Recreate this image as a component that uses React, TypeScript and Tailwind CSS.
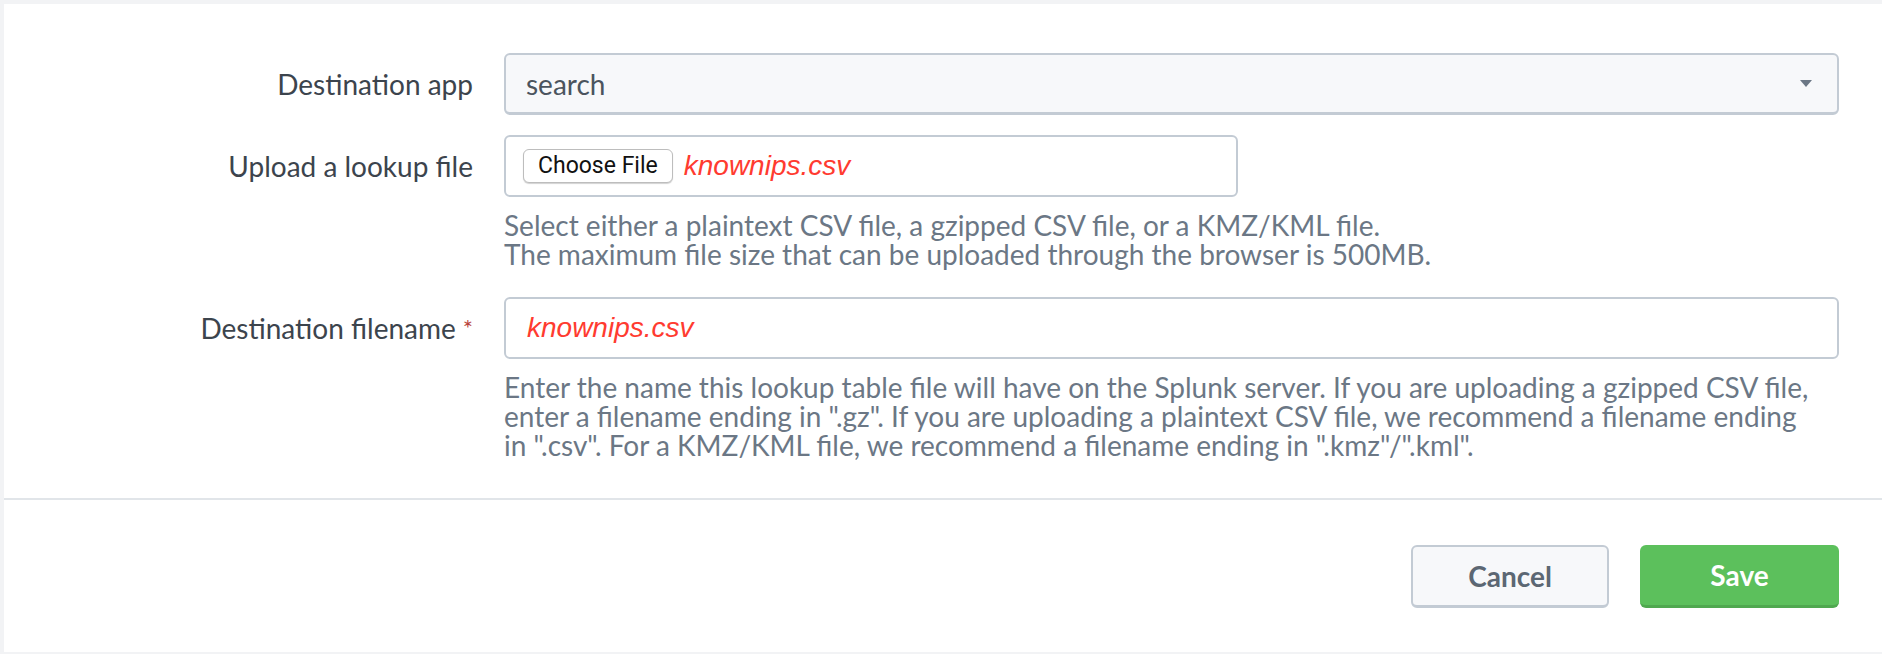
import React from "react";

function Label({ children }: { children: React.ReactNode }) {
  return (
    <div className="flex h-[62px] items-center justify-end whitespace-nowrap text-[28px] text-[#3c444d]">
      {children}
    </div>
  );
}

export default function App() {
  return (
    <div className="h-[654px] w-full overflow-hidden bg-[#f2f3f5] pl-[4px] pt-[4px] font-[Lato,sans-serif]">
      <div className="flex h-[648px] flex-col bg-white">
        {/* form */}
        <div className="h-[494px] pr-[43px] pt-[49px]">
          {/* Destination app */}
          <div className="grid grid-cols-[469px_1fr] gap-x-[31px]">
            <Label>Destination app</Label>
            <div className="flex h-[62px] items-center justify-between rounded-[6px] border-2 border-b-[3px] border-[#c3cbd4] bg-[#f7f8fa] pl-[20px] pr-[25px]">
              <span className="text-[28px] text-[#4b545e]">search</span>
              <svg width="12" height="7" viewBox="0 0 12 7" aria-hidden="true">
                <path d="M0 0H12L6 7Z" fill="#6b7785" />
              </svg>
            </div>
          </div>

          {/* Upload a lookup file */}
          <div className="mt-[20px] grid grid-cols-[469px_1fr] gap-x-[31px]">
            <Label>Upload a lookup file</Label>
            <div>
              <div className="flex h-[62px] w-[734px] items-center rounded-[6px] border-2 border-[#c3cbd4] bg-white pl-[17px]">
                <div className="flex h-[34px] items-center rounded-[6px] border border-[#bdbdbd] bg-white px-[14px] font-[Roboto,sans-serif] text-[23px] text-[#111] shadow-[0_1px_1px_rgba(0,0,0,0.18)]">
                  Choose File
                </div>
                <span className="ml-[11px] font-['Liberation_Sans',Arial,sans-serif] text-[28px] italic text-[#ff3b30]">
                  knownips.csv
                </span>
              </div>
              <div className="mt-[14px] text-[28px] leading-[29px] text-[#6b7785]">
                Select either a plaintext CSV file, a gzipped CSV file, or a KMZ/KML file.
                <br />
                The maximum file size that can be uploaded through the browser is 500MB.
              </div>
            </div>
          </div>

          {/* Destination filename */}
          <div className="mt-[28px] grid grid-cols-[469px_1fr] gap-x-[31px]">
            <Label>
              Destination filename<span className="ml-[7px] text-[24px] text-[#b9433c]">*</span>
            </Label>
            <div>
              <div className="flex h-[62px] items-center rounded-[6px] border-2 border-[#c3cbd4] bg-white pl-[21px]">
                <span className="font-['Liberation_Sans',Arial,sans-serif] text-[28px] italic text-[#ff3b30]">
                  knownips.csv
                </span>
              </div>
              <div className="mt-[14px] text-[28px] leading-[29px] text-[#6b7785]">
                Enter the name this lookup table file will have on the Splunk server. If you are uploading a gzipped CSV file,
                <br />
                enter a filename ending in ".gz". If you are uploading a plaintext CSV file, we recommend a filename ending
                <br />
                in ".csv". For a KMZ/KML file, we recommend a filename ending in ".kmz"/".kml".
              </div>
            </div>
          </div>
        </div>

        <div className="h-[2px] bg-[#e1e5e9]" />

        {/* footer */}
        <div className="flex flex-1 items-center justify-end gap-[31px] pr-[43px]">
          <button className="flex h-[63px] w-[198px] items-center justify-center rounded-[6px] border-2 border-b-[3px] border-[#c3cbd4] bg-[#f7f8fa] text-[28px] font-bold text-[#5c6773]">
            Cancel
          </button>
          <button className="flex h-[63px] w-[199px] items-center justify-center rounded-[6px] border-b-[3px] border-[#4fa84f] bg-[#5cc05c] text-[28px] font-bold text-white">
            Save
          </button>
        </div>
      </div>
    </div>
  );
}
